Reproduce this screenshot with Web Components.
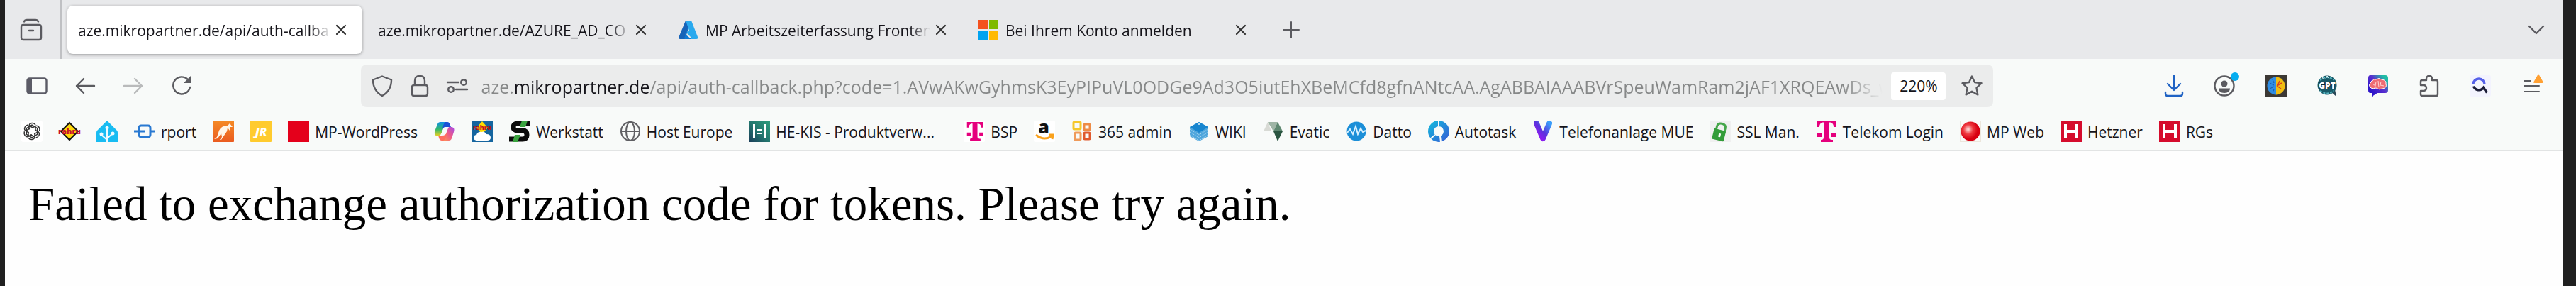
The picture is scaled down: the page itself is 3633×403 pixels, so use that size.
<!DOCTYPE html>
<html lang="de">
<head>
<meta charset="utf-8">
<title>aze.mikropartner.de</title>
<style>
  html { height: 100%; background: #202020; }
  body { margin: 0; min-height: 100%; display: grid; font-family: "Open Sans", "Noto Sans", sans-serif; color: #15141a; }
</style>
</head>
<body>
<browser-window>
  <tab-strip slot="tabs">
    <browser-tab selected>aze.mikropartner.de/api/auth-callba</browser-tab>
    <browser-tab>aze.mikropartner.de/AZURE_AD_CO</browser-tab>
    <browser-tab icon="azure">MP Arbeitszeiterfassung Fronten</browser-tab>
    <browser-tab icon="microsoft">Bei Ihrem Konto anmelden</browser-tab>
  </tab-strip>
  <nav-bar slot="nav">
    <tool-button slot="start" icon="sidebar" label="Seitenleiste"></tool-button>
    <tool-button slot="start" icon="back" label="Zurück"></tool-button>
    <tool-button slot="start" icon="forward" label="Vor"></tool-button>
    <tool-button slot="start" icon="reload" label="Neu laden"></tool-button>
    <url-bar></url-bar>
    <tool-button slot="end" icon="download" label="Downloads"></tool-button>
    <tool-button slot="end" icon="account" label="Konto"></tool-button>
    <tool-button slot="end" icon="brainhalf" label="Erweiterung"></tool-button>
    <tool-button slot="end" icon="gpt" label="GPT-Suche"></tool-button>
    <tool-button slot="end" icon="brainchat" label="KI-Chat"></tool-button>
    <tool-button slot="end" icon="puzzle" label="Erweiterungen"></tool-button>
    <tool-button slot="end" icon="search" label="Suche"></tool-button>
    <tool-button slot="end" icon="menu" label="Menü"></tool-button>
  </nav-bar>
  <bookmark-bar slot="bookmarks">
    <book-mark icon="openai"></book-mark>
    <book-mark icon="diamond"></book-mark>
    <book-mark icon="home"></book-mark>
    <book-mark icon="rport">rport</book-mark>
    <book-mark icon="kangaroo"></book-mark>
    <book-mark icon="jr"></book-mark>
    <book-mark icon="red">MP-WordPress</book-mark>
    <book-mark icon="copilot"></book-mark>
    <book-mark icon="cloud"></book-mark>
    <book-mark icon="s">Werkstatt</book-mark>
    <book-mark icon="globe">Host Europe</book-mark>
    <book-mark icon="hekis" long>HE-KIS - Produktverw...</book-mark>
    <book-mark icon="telekombox">BSP</book-mark>
    <book-mark icon="amazon"></book-mark>
    <book-mark icon="office">365 admin</book-mark>
    <book-mark icon="wiki">WIKI</book-mark>
    <book-mark icon="evatic">Evatic</book-mark>
    <book-mark icon="datto">Datto</book-mark>
    <book-mark icon="autotask">Autotask</book-mark>
    <book-mark icon="v">Telefonanlage MUE</book-mark>
    <book-mark icon="ssl">SSL Man.</book-mark>
    <book-mark icon="telekom">Telekom Login</book-mark>
    <book-mark icon="ball">MP Web</book-mark>
    <book-mark icon="hetzner">Hetzner</book-mark>
    <book-mark icon="hetzner">RGs</book-mark>
  </bookmark-bar>
  <p-message>Failed to exchange authorization code for tokens. Please try again.</p-message>
</browser-window>

<script>
const line = (d, extra = 'stroke-width="2.4"') => `<path d="${d}" fill="none" stroke="#5b5b60" stroke-linecap="round" stroke-linejoin="round" ${extra}/>`;
const telekom = '<path d="M2 0h26v9h-3c0-4-2-6.500-6-6.500V23c0 3 1 4 5 4v3H7v-3c3 0 4-1 4-4V2.500C7 2.500 5 5 5 9H2z"/><path d="M2 17h6v6H2zM22 17h6v6h-6z"/>';

/* every drawing lives in a 30 x 30 box */
const ICONS = {
  history: line('M5 3.500Q6 1 9 1h12q3 0 4 2.500') + line('M4 8h22q3 0 3 3v15q0 3-3 3H4q-3 0-3-3V11q0-3 3-3z') + line('M12 16h6'),
  close: '<path d="M9 9l12 12M21 9L9 21" stroke="#333" stroke-width="2.200" stroke-linecap="round"/>',
  plus: line('M4 15h22M15 4v22', 'stroke-width="2"'),
  chevron: line('M5 10l10 10 10-10'),
  sidebar: '<rect x="1.500" y="4.500" width="27" height="21" rx="3" fill="none" stroke="#5b5b66" stroke-width="2.400"/><path d="M2 5h6v20H2z" fill="#5b5b66"/>',
  back: line('M28 15H3M13 5L3 15l10 10'),
  forward: '<g opacity=".4">' + line('M2 15h25M17 5l10 10-10 10') + '</g>',
  reload: line('M26 9A12 12 0 1 0 27 17') + '<path d="M28 1v10H18z" fill="#5b5b60"/>',
  shield: line('M15 1.500L28 6.500C28 17 24 24 15 29 6 24 2 17 2 6.500z'),
  lock: line('M7 14h16q3 0 3 3v9q0 3-3 3H7q-3 0-3-3v-9q0-3 3-3zM8 14V8q0-7 7-7t7 7v6'),
  perms: line('M1 10h16M13 20h16') + '<g fill="none" stroke="#5b5b60" stroke-width="2.400"><circle cx="24" cy="10" r="3.800"/><circle cx="6" cy="20" r="3.800"/></g>',
  star: line('M15 1.500l4 8.500 9.500 1.200-7 6.600 1.800 9.700-8.300-4.700-8.300 4.700 1.800-9.700-7-6.600L11 10z'),
  download: '<path d="M15 1v19M6 12l9 9 9-9M3 24v2q0 3 3 3h18q3 0 3-3v-2" fill="none" stroke="#1f62c4" stroke-width="2.400" stroke-linecap="round" stroke-linejoin="round"/>',
  account: '<circle cx="14" cy="15" r="13.500" fill="none" stroke="#5b5b60" stroke-width="2.400"/><circle cx="14" cy="12" r="4.500" fill="#5b5b60"/><path d="M6 18.500h16q0 6.500-8 6.500t-8-6.500z" fill="#5b5b60"/><circle cx="29" cy="2" r="6" fill="#06adf0"/>',
  brainhalf: '<rect width="30" height="30" fill="#3c3834"/><path d="M15 2.500A12.500 12.500 0 0 0 15 27.500z" fill="#2f8de4"/><path d="M15 2.500A12.500 12.500 0 0 1 15 27.500z" fill="#f0bd12"/><path d="M6 11l6 3M6 19l6-3M10 6l2 5M10 24l2-4" stroke="#1556a8" fill="none"/><path d="M16 15l7-4M16 15l6 4M17 15l3-7" stroke="#d9411e" stroke-width="1.500"/>',
  gpt: '<path d="M20 23l8 7-2-10z" fill="#2b4655"/><circle cx="15" cy="14" r="13.500" fill="#195a68"/><path d="M5 7q10-8 20 0M5 22q10 7 19 0" stroke="#58b6c3" stroke-width="2" fill="none" stroke-dasharray="3 2"/><path d="M13 5l2-4 3 4M8 3l2 3" stroke="#fff" fill="none"/><text x="15" y="19" text-anchor="middle" font-size="12" font-weight="800" fill="#fff" stroke="#102a30" stroke-width="2" paint-order="stroke">GPT</text>',
  brainchat: '<defs><linearGradient id="g" x1="0" y1="1" x2="1" y2="0"><stop offset=".2" stop-color="#2e15c9"/><stop offset=".55" stop-color="#5a2fd0"/><stop offset=".85" stop-color="#20bda4"/></linearGradient></defs><path d="M4 0h21q4 0 4 4v17q0 4-4 4H14l-8 5V25H4q-3 0-3-4V4q0-4 3-4z" fill="url(#g)"/><path d="M5 18q-5-4 0-8 1-5 7-4 4-3 8 0 7 1 6 6 2 6-5 7-5 2-9-1-5 2-7 0z" fill="#ef6d74" stroke="#fff" stroke-width="1"/><path d="M7 12l4 3 1-6M15 8l1 9M19 9l-1 5 5 1M9 17l3-1" stroke="#ffd6d2" fill="none" stroke-width="1"/>',
  puzzle: line('M7 7h4V5q0-4 4-4t4 4v2h6q2 0 2 2v18q0 2-2 2H5q-2 0-2-2v-5h4q4 0 4-4t-4-4H3V9q0-2 2-2z'),
  search: '<rect width="30" height="30" rx="3" fill="#f3f3fe"/><path d="M5 13a8 8 0 0 1 16 0" fill="none" stroke="#5560e8" stroke-width="3.500"/><path d="M5.500 15.500a8 8 0 0 0 14 2l5 7" fill="none" stroke="#1c1d38" stroke-width="3.500"/>',
  menu: line('M5 8h9M5 15h21M5 23h21', 'stroke-width="2"') + '<path d="M18 10l7-12 7 12q0 1-2 1H20q-2 0-2-1z" fill="#ffa032"/>',
  azure: '<path d="M11 2h8L10 28H3q-2 0-2-2z" fill="#1763b8"/><path d="M11 2h8l9 23q1 3-2 3H10l10-1-8-8 4-3z" fill="#29a9ee"/><path d="M15 11l-5 10 9 7h-9l-1-1z" fill="#0f7ad4"/>',
  microsoft: '<path d="M1 1h13v13H1z" fill="#f4511f"/><path d="M16 1h13v13H16z" fill="#7fba00"/><path d="M1 16h13v13H1z" fill="#00a3f0"/><path d="M16 16h13v13H16z" fill="#ffb901"/>',
  openai: '<rect width="30" height="30" rx="3" fill="#fff"/><g fill="none" stroke="#333" stroke-width="1.500">' + [0, 60, 120, 180, 240, 300].map(a => `<path transform="rotate(${a} 15 15)" d="M11 12.500V8q0-4 4-4.500 3-.3 5 2.200M11 8.500l4-2.300 5 3v5"/>`).join('') + '</g>',
  diamond: '<path d="M15 3l12 12-12 12L3 15z" fill="#ffd70a" stroke="#111" stroke-width="2"/><text x="15" y="19" text-anchor="middle" font-size="11" font-weight="800" fill="#c8102e">rahru</text>',
  home: '<path d="M15 0l14 14q1 1 1 3v13H0V17q0-2 1-3z" fill="#18bcf2"/><path d="M15 30V9M15 27l-8-7M15 25l8-7" stroke="#effaff" stroke-width="2"/><g fill="#effaff"><circle cx="15" cy="10" r="2.500"/><circle cx="7" cy="19" r="2.500"/><circle cx="23" cy="18" r="2.500"/></g>',
  rport: '<g fill="none" stroke="#2979d2" stroke-width="3"><rect x="7" y="7" width="16" height="16" rx="3"/><path d="M0 15h15M23 15h7"/></g>',
  kangaroo: '<defs><linearGradient id="g" x2="0" y2="1"><stop stop-color="#f58a25"/><stop offset="1" stop-color="#ea5b20"/></linearGradient></defs><rect width="30" height="30" rx="1" fill="url(#g)"/><path d="M28 9l-4-5-3 3q-9 0-12 7l-3 9-4 3 5-1 5-7 1 5-3 4h2l4-6 4-6 1-5 3 4 0-5z" fill="#fff5e8"/>',
  jr: '<rect width="30" height="30" rx="1" fill="#ffcb2e"/><text x="15" y="21" text-anchor="middle" font-size="16" font-weight="800" font-style="italic" fill="#fff">JR</text>',
  red: '<rect width="30" height="30" fill="#e4001b"/>',
  copilot: '<defs><linearGradient id="a" x2="0" y2="1"><stop stop-color="#0e8fe8"/><stop offset=".5" stop-color="#31b86c"/><stop offset="1" stop-color="#f5d01f"/></linearGradient><linearGradient id="b" x1="1" x2="0" y2="1"><stop stop-color="#a54ae8"/><stop offset=".5" stop-color="#ee5a86"/><stop offset="1" stop-color="#ff9a52"/></linearGradient></defs><path d="M9 2h9q-3 2-5 9t-5 11H5q-5-1-4-7l4-10q1-3 4-3z" fill="url(#a)"/><path d="M16 2h3q3 0 4 5l1 2h-8q-3 0-4 4 1-9 4-11z" fill="#1b52d6"/><path d="M21 28h-9q3-2 5-9t4-10h4q5 1 3 7l-3 9q-1 3-4 3z" fill="url(#b)"/><path d="M13 28h-2q-3 0-4-4l-1-3h6q4 0 6-4-1 9-5 11z" fill="#ff6f5e"/>',
  cloud: '<rect width="30" height="30" fill="#15659f"/><path d="M15 1l8 9-8 9-8-9z" fill="#ffdc00"/><text x="15" y="13" text-anchor="middle" font-size="9" font-weight="800" fill="#c1121f">rahru</text><path d="M7 28q-5-1-4-5 1-3 4-3 2-5 7-4 4-2 7 3 6 0 6 5 0 4-5 4z" fill="#fff"/>',
  s: '<path d="M29 4H13q-7 0-7 5t7 5h6q6 0 6 6t-6 6H0" fill="none" stroke="#0b0b0b" stroke-width="7"/><path d="M18 0h8l-3 9h-8zM8 20h8l-4 10H5z" fill="#3aa33f"/>',
  globe: '<g fill="none" stroke="#5f5f63" stroke-width="2"><circle cx="15" cy="15" r="13"/><ellipse cx="15" cy="15" rx="6" ry="13"/><path d="M2 15h26"/></g>',
  hekis: '<defs><linearGradient id="g" y1="1" x2="1" y2="0"><stop stop-color="#1c3d5a"/><stop offset=".5" stop-color="#23786f"/><stop offset="1" stop-color="#2f9d7c"/></linearGradient></defs><rect width="30" height="30" fill="url(#g)"/><path d="M6 5h3v20H6zM21 5h3v20h-3zM12 12h6v2h-6zM12 17h6v2h-6z" fill="#fff"/>',
  telekombox: '<rect width="30" height="30" rx="2" fill="#fff"/><g fill="#e5007d" transform="translate(3 2) scale(.87)">' + telekom + '</g>',
  telekom: '<g fill="#e5007d">' + telekom + '</g>',
  amazon: '<rect width="30" height="30" rx="2" fill="#fff"/><text x="14" y="18" text-anchor="middle" font-size="25" font-weight="800" fill="#111">a</text><path d="M3 20q11 9 22 2M22 20l5 0-1 6" fill="none" stroke="#f9a11b" stroke-width="3"/>',
  office: '<g fill="none" stroke-width="3"><rect x="3" y="2" width="10" height="10" rx="1" stroke="#f5c72c"/><rect x="18" y="5" width="8" height="8" rx="1" stroke="#ee8b45"/><rect x="5" y="17" width="8" height="10" rx="1" stroke="#ef9a5a"/><rect x="18" y="17" width="8" height="9" rx="1" stroke="#e0592e"/></g>',
  wiki: '<path d="M15 2l13 7v13l-13 7-13-7V9z" fill="#4fa6dc"/><path d="M15 2l13 7-13 8L2 9z" fill="#1785cf"/><path d="M2 12l13 8 13-8M2 16l13 8 13-8M2 20l13 8 13-8" stroke="#a9d5f0" fill="none" stroke-dasharray="3 1"/><path d="M13 5l2-1 2 1-2 1z" fill="#e4f3fb"/>',
  evatic: '<path d="M7 2L1 15h11z" fill="#d8dad5"/><path d="M7 2h14l-6 13z" fill="#9fb5a6"/><path d="M21 2l7 13H15z" fill="#5f8871"/><path d="M15 15h13l-7 14z" fill="#2b5541"/>',
  datto: '<circle cx="15" cy="15" r="13.500" fill="#1c8fd8"/><path d="M2 17l4-5 4 7 4-11 3 11 4-8 3 5 4-2" fill="none" stroke="#d8f1ff" stroke-width="2"/>',
  autotask: '<defs><linearGradient id="g" x2="1" y2="1"><stop stop-color="#17b0dc"/><stop offset="1" stop-color="#3167d6"/></linearGradient></defs><circle cx="15" cy="15" r="11" fill="none" stroke="url(#g)" stroke-width="8"/><path d="M15 0v8M10 20l-6 5M17 22l1 8" stroke="#f8faf9" stroke-width="2"/>',
  v: '<defs><linearGradient id="g" x1="1" x2="0" y2="1"><stop stop-color="#3a9dfb"/><stop offset=".5" stop-color="#5b33dc"/><stop offset="1" stop-color="#a511fb"/></linearGradient></defs><path d="M6 4l9 21L24 4" fill="none" stroke="url(#g)" stroke-width="8" stroke-linecap="round" stroke-linejoin="round"/>',
  ssl: '<rect width="30" height="30" fill="#f0f0f0"/><g transform="rotate(14 15 15)"><path d="M9 14V9q0-5 6-5t6 5v5" fill="none" stroke="#45a64a" stroke-width="3"/><rect x="6" y="13" width="17" height="15" rx="1" fill="#339c39"/><path d="M14 18h3v5h-3z" fill="#fff"/></g>',
  ball: '<defs><radialGradient id="g" cx=".38" cy=".4"><stop stop-color="#ffe3e0"/><stop offset=".5" stop-color="#ef3a40"/><stop offset="1" stop-color="#d80012"/></radialGradient></defs><rect x=".5" y=".5" width="29" height="29" fill="#faf9f7" stroke="#ece6dc"/><circle cx="15" cy="15" r="13.500" fill="url(#g)"/>',
  hetzner: '<rect width="30" height="30" fill="#d50c2d"/><path d="M5 5h4v8h12V5h4v20h-4v-8H9v8H5z" fill="#fff"/>'
};

const define = (name, css, html) => customElements.define(name, class extends HTMLElement {
  connectedCallback() {
    if (this.shadowRoot) return;
    const root = this.attachShadow({ mode: 'open' });
    root.innerHTML = `<style>*{box-sizing:border-box}button{border:0;padding:0;background:none;font:inherit;color:inherit;display:flex;align-items:center;justify-content:center}${css}</style>` + (typeof html === 'function' ? html(this) : html);
  }
});

define('ui-icon',
  ':host{display:block;flex:none;width:30px;height:30px}svg{display:block;width:100%;height:100%;overflow:visible;font-family:"Open Sans",sans-serif}',
  el => `<svg viewBox="0 0 30 30" aria-hidden="true">${ICONS[el.getAttribute('name')] || ''}</svg>`);

define('browser-window',
  ':host{display:flex;flex-direction:column;min-width:0;padding:0 18px 0 7px;background:#202020;box-sizing:border-box}main{flex:1;background:#fefefe}',
  '<slot name="tabs"></slot><slot name="nav"></slot><slot name="bookmarks"></slot><main><slot></slot></main>');

define('tab-strip',
  `:host{display:flex;align-items:center;height:83px;background:#e8e9eb}
   .recent{align-self:stretch;width:80px;padding-right:4px;border-right:2px solid #bfc0c3;display:grid}
   .tabs{display:flex;gap:7px;margin:0 8px}
   .new,.all{width:66px;height:66px}
   .all{margin-left:auto;margin-right:5px}`,
  `<div class="recent"><button aria-label="Letzte Tabs"><ui-icon name="history"></ui-icon></button></div>
   <div class="tabs" role="tablist"><slot></slot></div>
   <button class="new" aria-label="Neuer Tab"><ui-icon name="plus"></ui-icon></button>
   <button class="all" aria-label="Alle Tabs"><ui-icon name="chevron"></ui-icon></button>`);

define('browser-tab',
  `:host{display:flex;align-items:center;width:416px;height:68px;padding:0 15px;border-radius:8px;font-size:21px;box-sizing:border-box}
   :host([selected]){background:#fff;box-shadow:0 1px 4px rgba(0,0,0,.35)}
   ui-icon{margin-right:9px}
   .label{flex:1;min-width:0;padding-top:2px;overflow:hidden;white-space:nowrap;-webkit-mask-image:linear-gradient(to left,transparent,#000 28px)}
   button ui-icon{margin:0}`,
  el => `${el.hasAttribute('icon') ? `<ui-icon name="${el.getAttribute('icon')}"></ui-icon>` : ''}<span class="label"><slot></slot></span><button aria-label="Tab schließen"><ui-icon name="close"></ui-icon></button>`);

define('tool-button',
  ':host{display:block}button{width:var(--tool-width,68px);height:60px}',
  el => `<button aria-label="${el.getAttribute('label')}"><ui-icon name="${el.getAttribute('icon')}"></ui-icon></button>`);

define('nav-bar',
  `:host{display:flex;align-items:center;height:76px;padding:0 9px 0 11px;background:#f8faf9;box-sizing:border-box}
   div{display:flex}.end{--tool-width:72px}.spring{flex:2}::slotted(url-bar){flex:21}`,
  '<div><slot name="start"></slot></div><span class="spring"></span><slot></slot><span class="spring"></span><div class="end"><slot name="end"></slot></div>');

/* the host name is dark, the rest of the address grey, fading out at the right */
define('url-bar',
  `:host{display:flex;align-items:center;min-width:0;height:60px;padding:0 4px;border-radius:8px;background:#ebecec;--tool-width:53px;box-sizing:border-box}
   input{flex:1;min-width:0;margin:0 12px 0 7px;padding:2px 0 0;border:0;outline:0;font:25px "Open Sans",sans-serif;color:#868888;
     background:linear-gradient(to right,#868888 48px,#15141a 48px,#15141a 236px,#868888 236px,#868888 calc(100% - 56px),transparent);
     -webkit-background-clip:text;background-clip:text;-webkit-text-fill-color:transparent}
   .zoom{width:77px;height:39px;margin-right:10px;border-radius:4px;background:#fff;font-size:21px}`,
  `<tool-button icon="shield" label="Schutz"></tool-button><tool-button icon="lock" label="Verbindung"></tool-button><tool-button icon="perms" label="Berechtigungen"></tool-button>
   <input type="text" aria-label="Adresse" value="aze.mikropartner.de/api/auth-callback.php?code=1.AVwAKwGyhmsK3EyPIPuVL0ODGe9Ad3O5iutEhXBeMCfd8gfnANtcAA.AgABBAIAAABVrSpeuWamRam2jAF1XRQEAwDs_w">
   <button class="zoom">220%</button><tool-button icon="star" label="Lesezeichen"></tool-button>`);

define('bookmark-bar',
  ':host{display:flex;align-items:center;gap:23px;height:54px;padding:0 23px;border-bottom:2px solid #e2e4e4;background:#f8faf9;font-size:21px;box-sizing:border-box}',
  '<slot></slot>');

define('book-mark',
  `:host{display:block;flex:none}:host([long]){width:280px}
   a{display:flex;align-items:center;gap:8px;color:inherit;text-decoration:none;white-space:nowrap}
   .label{padding-top:2px;line-height:28px}`,
  el => `<a href="#" aria-label="${el.textContent || el.getAttribute('icon')}"><ui-icon name="${el.getAttribute('icon')}"></ui-icon>${el.textContent ? '<span class="label"><slot></slot></span>' : ''}</a>`);

define('p-message',
  ':host{display:block;padding:36px 33px;font:67px "Liberation Serif",serif;color:#000}p{margin:0}',
  '<p><slot></slot></p>');
</script>
</body>
</html>
